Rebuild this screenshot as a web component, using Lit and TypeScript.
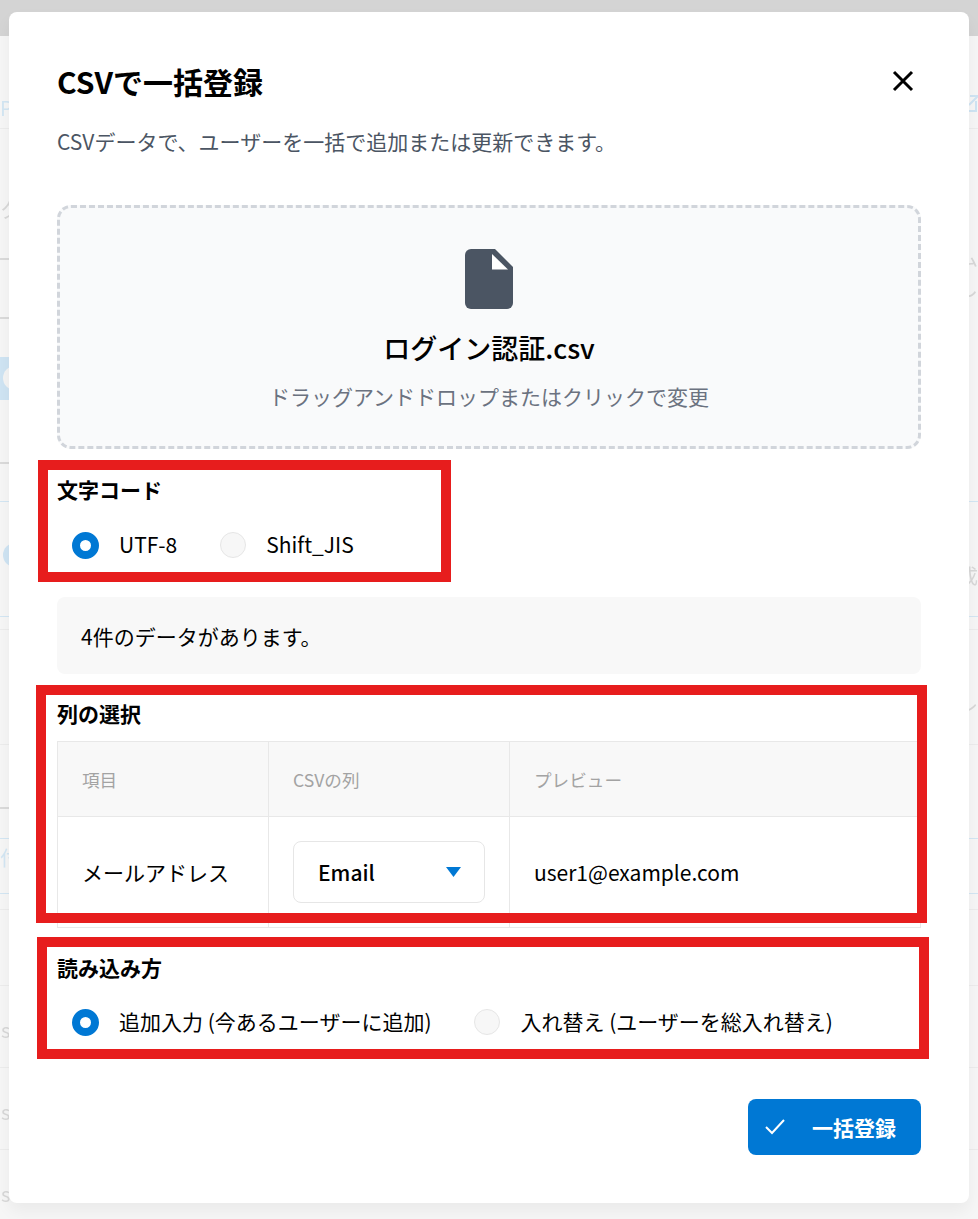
import { LitElement, html, css, svg, unsafeCSS } from 'lit';
import { customElement } from 'lit/decorators.js';

const FONT = unsafeCSS(`"Noto Sans CJK JP", "Noto Sans", sans-serif`);

@customElement('app-root')
export class AppRoot extends LitElement {
  static styles = css`
    :host {
      display: block;
      position: relative;
      width: 978px;
      height: 1219px;
      overflow: hidden;
      background: #f6f6f6;
      font-family: ${FONT};
      color: #000;
    }
    .backdrop {
      position: absolute;
      inset: 0;
      filter: blur(0.6px);
    }
    .topbar {
      height: 36px;
      background: #d4d4d4;
    }
    .ghost-line {
      position: absolute;
      left: 0;
      width: 978px;
      height: 1px;
      background: #ececec;
    }
    .ghost-line.blue {
      background: #d3e6f3;
    }
    .ghost-dash {
      position: absolute;
      left: 0;
      width: 9px;
      border-top: 2px dashed #dadada;
    }
    .ghost-text {
      position: absolute;
      font-size: 20px;
      line-height: 24px;
      color: #d8d8d8;
    }
    .ghost-text.blue {
      color: #d3e6f3;
    }
    .ghost-band {
      position: absolute;
      left: 0;
      top: 357px;
      width: 10px;
      height: 43px;
      background: #cfe4f3;
    }
    .ghost-dot {
      position: absolute;
      left: 3px;
      width: 24px;
      height: 24px;
      border-radius: 50%;
      background: #cfe4f3;
    }
    .ghost-dot.light {
      background: #f4f4f4;
      top: 366px;
    }
    .ghost-link {
      position: absolute;
      left: 967px;
      top: 95px;
    }
    .modal {
      position: absolute;
      left: 9px;
      top: 12px;
      width: 960px;
      box-sizing: border-box;
      padding: 51px 48px 48px;
      background: #fff;
      border-radius: 8px;
      box-shadow: 0 8px 16px rgba(0, 0, 0, 0.05);
      display: flex;
      flex-direction: column;
    }
    .head {
      display: flex;
      justify-content: space-between;
      align-items: center;
      height: 40px;
    }
    h1 {
      margin: 0 0 4px;
      font-size: 30px;
      line-height: 36px;
      font-weight: 700;
    }
    .close {
      display: block;
      margin-right: 6px;
      margin-top: -4px;
    }
    .sub {
      margin: 21px 0 0;
      font-size: 21px;
      line-height: 34px;
      color: #4b5563;
    }
    .drop {
      margin-top: 47px;
      height: 244px;
      box-sizing: border-box;
      border: 3px dashed #d1d5db;
      border-radius: 14px;
      background: #f9fafb;
      padding-top: 41px;
      display: flex;
      flex-direction: column;
      align-items: center;
    }
    .file-icon {
      display: block;
    }
    .file-name {
      margin-top: 17px;
      font-size: 27px;
      line-height: 44px;
      font-weight: 500;
    }
    .hint {
      margin-top: 12px;
      font-size: 21px;
      line-height: 28px;
      color: #6b7280;
    }
    .label {
      font-size: 21px;
      line-height: 30px;
      font-weight: 700;
    }
    .label.first {
      margin-top: 25px;
    }
    .label.second {
      margin-top: 24px;
    }
    .label.third {
      margin-top: 24px;
    }
    .radios {
      display: flex;
      padding-left: 15px;
      margin-top: 25px;
      font-size: 21px;
      line-height: 30px;
    }
    .radios.method {
      margin-top: 24px;
    }
    .opt {
      display: flex;
      align-items: center;
      margin-right: 43px;
    }
    .dot {
      width: 26px;
      height: 26px;
      box-sizing: border-box;
      margin: 2px 20px 0 0;
      border-radius: 50%;
      border: 1px solid #e6e6e6;
      background: #f7f7f7;
    }
    .dot.on {
      width: 27px;
      height: 27px;
      border: 8.5px solid #0078d4;
      background: #fff;
    }
    .info {
      margin-top: 38px;
      height: 77px;
      box-sizing: border-box;
      padding-left: 24px;
      display: flex;
      align-items: center;
      border-radius: 8px;
      background: #f8f8f8;
      font-size: 21px;
    }
    .table {
      margin-top: 13px;
      display: grid;
      grid-template-columns: 210px 241px 1fr;
      grid-template-rows: 75px 110px;
      border: 1px solid #e8e8e8;
    }
    .cell {
      display: flex;
      align-items: center;
      padding-left: 24px;
      font-size: 21px;
    }
    .cell.col {
      border-left: 1px solid #e8e8e8;
    }
    .cell.th {
      background: #f8f8f8;
      border-bottom: 1px solid #e8e8e8;
      font-size: 17.6px;
      color: #a3a3a3;
    }
    .cell.tall {
      align-items: flex-start;
      padding-top: 24px;
      line-height: 62px;
    }
    .select {
      width: 192px;
      height: 62px;
      box-sizing: border-box;
      border: 1px solid #e6e6e6;
      border-radius: 8px;
      padding: 0 23px 0 24px;
      display: flex;
      justify-content: space-between;
      align-items: center;
      font-weight: 500;
    }
    .actions {
      margin-top: 63px;
      display: flex;
      justify-content: flex-end;
    }
    button {
      width: 173px;
      height: 56px;
      border: 0;
      border-radius: 8px;
      background: #0078d4;
      color: #fff;
      font: 700 21px ${FONT};
      display: flex;
      align-items: center;
      padding: 0 0 0 17px;
    }
    button svg {
      margin-right: 27px;
    }
    .mark {
      position: absolute;
      box-sizing: border-box;
      border: 10.5px solid #e71d1d;
      pointer-events: none;
    }
    .mark.a {
      left: 38px;
      top: 460px;
      width: 413px;
      height: 122px;
    }
    .mark.b {
      left: 36px;
      top: 685px;
      width: 891px;
      height: 238px;
    }
    .mark.c {
      left: 37px;
      top: 937px;
      width: 892px;
      height: 122px;
    }
  `;

  // the page behind the dialog: only slivers of it show at the edges
  private ghosts() {
    const lines: [number, boolean][] = [
      [128, false], [501, true], [616, true], [629, false], [744, false],
      [838, true], [893, true], [909, false], [985, false], [1067, false], [1149, false],
    ];
    const dashes = [258, 317, 462, 807];
    const texts: [number, number, string, boolean][] = [
      [0, 96, 'P', true], [0, 198, 'ク', false], [0, 846, '付', true],
      [1, 1018, 's', false], [1, 1100, 's', false], [1, 1182, 's', false],
      [958, 246, 'ム', false], [958, 276, 'し', false], [958, 564, '成', false],
      [958, 693, 'レ', false],
    ];
    return html`
      <div class="topbar"></div>
      ${lines.map(
        ([y, blue]) => html`<div class="ghost-line ${blue ? 'blue' : ''}" style="top:${y}px"></div>`
      )}
      ${dashes.map((y) => html`<div class="ghost-dash" style="top:${y}px"></div>`)}
      ${texts.map(
        ([x, y, t, blue]) =>
          html`<div class="ghost-text ${blue ? 'blue' : ''}" style="left:${x}px;top:${y}px">${t}</div>`
      )}
      <div class="ghost-band"></div>
      <div class="ghost-dot light"></div>
      <div class="ghost-dot" style="top:543px"></div>
      <svg class="ghost-link" width="11" height="18" viewBox="0 0 11 18" fill="none" stroke="#cfe4f3" stroke-width="2">
        <path d="M0 16h9V6M3 1h8M11 1 2 10"></path>
      </svg>
    `;
  }

  private radio(label: string, on = false) {
    return html`<div class="opt"><span class="dot ${on ? 'on' : ''}"></span>${label}</div>`;
  }

  render() {
    return html`
      <div class="backdrop">${this.ghosts()}</div>
      <div class="modal">
        <div class="head">
          <h1>CSVで一括登録</h1>
          <svg class="close" width="24" height="24" viewBox="0 0 24 24" fill="none" stroke="#000" stroke-width="3">
            <path d="M3 3l18 18M21 3 3 21"></path>
          </svg>
        </div>
        <p class="sub">CSVデータで、ユーザーを一括で追加または更新できます。</p>

        <div class="drop">
          <svg class="file-icon" width="48" height="60" viewBox="0 0 48 60">
            ${svg`<path fill="#4b5563" d="M6 0H30L48 18V54a6 6 0 0 1-6 6H6a6 6 0 0 1-6-6V6a6 6 0 0 1 6-6Z"></path>
            <path fill="#fff" d="M27 5 43 20.500H27Z"></path>`}
          </svg>
          <div class="file-name">ログイン認証.csv</div>
          <div class="hint">ドラッグアンドドロップまたはクリックで変更</div>
        </div>

        <div class="label first">文字コード</div>
        <div class="radios">${this.radio('UTF-8', true)}${this.radio('Shift_JIS')}</div>

        <div class="info">4件のデータがあります。</div>

        <div class="label second">列の選択</div>
        <div class="table">
          <div class="cell th">項目</div>
          <div class="cell th col">CSVの列</div>
          <div class="cell th col">プレビュー</div>
          <div class="cell tall">メールアドレス</div>
          <div class="cell tall col">
            <div class="select">
              Email
              <svg width="15" height="10" viewBox="0 0 15 10"><path fill="#0078d4" d="M0 0h15L7.500 10Z"></path></svg>
            </div>
          </div>
          <div class="cell tall col">user1@example.com</div>
        </div>

        <div class="label third">読み込み方</div>
        <div class="radios method">
          ${this.radio('追加入力 (今あるユーザーに追加)', true)}${this.radio('入れ替え (ユーザーを総入れ替え)')}
        </div>

        <div class="actions">
          <button>
            <svg width="20" height="16" viewBox="0 0 20 16" fill="none" stroke="#fff" stroke-width="2">
              <path d="M1 8l6 6L19 1"></path>
            </svg>
            一括登録
          </button>
        </div>
      </div>
      <div class="mark a"></div>
      <div class="mark b"></div>
      <div class="mark c"></div>
    `;
  }
}
